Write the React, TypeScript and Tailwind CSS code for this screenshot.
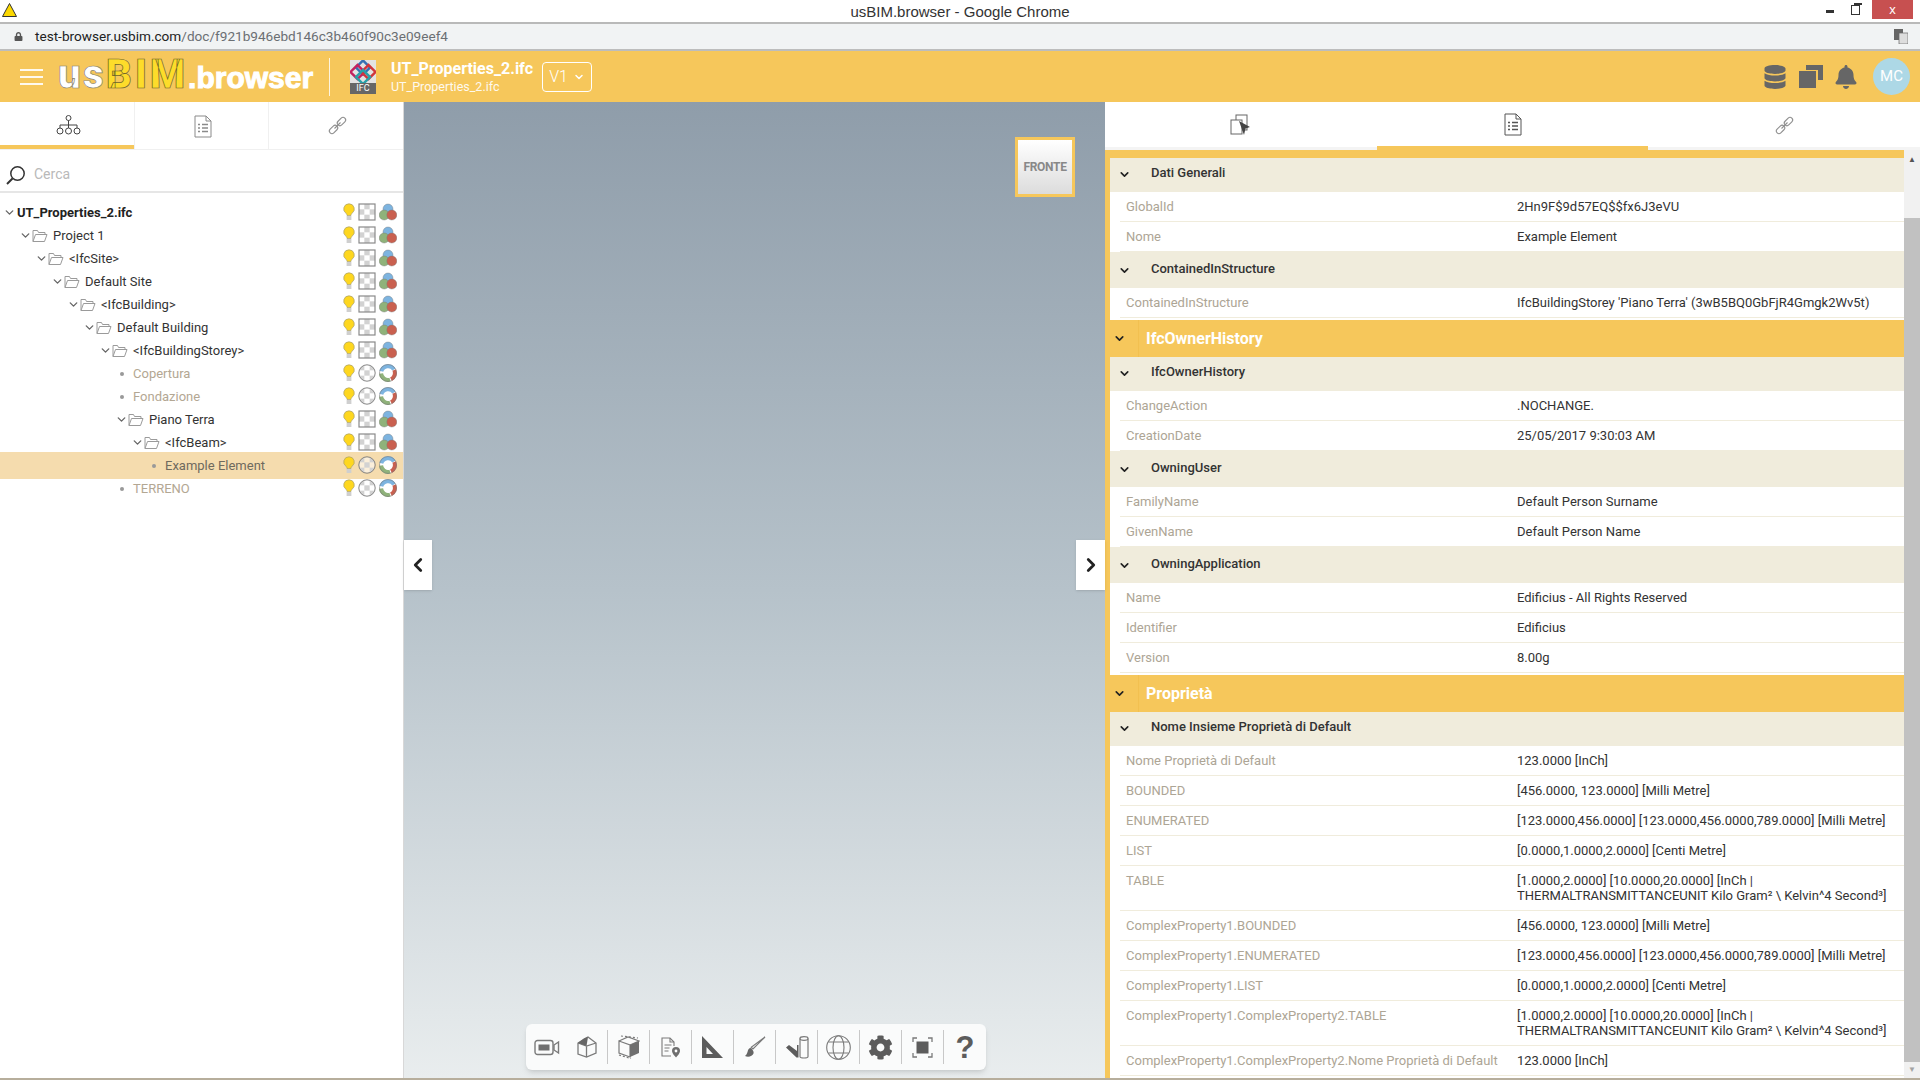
import { ChevronDown, ChevronLeft, ChevronRight } from 'lucide-react'
import { FaBell, FaCog, FaDatabase, FaLock } from 'react-icons/fa'

type TreeRow = { name: string; indent: number; kind: 'root' | 'folder' | 'leaf'; selected?: boolean }

const tree: TreeRow[] = [
  { name: 'UT_Properties_2.ifc', indent: 0, kind: 'root' },
  { name: 'Project 1', indent: 0, kind: 'folder' },
  { name: '<IfcSite>', indent: 1, kind: 'folder' },
  { name: 'Default Site', indent: 2, kind: 'folder' },
  { name: '<IfcBuilding>', indent: 3, kind: 'folder' },
  { name: 'Default Building', indent: 4, kind: 'folder' },
  { name: '<IfcBuildingStorey>', indent: 5, kind: 'folder' },
  { name: 'Copertura', indent: 6, kind: 'leaf' },
  { name: 'Fondazione', indent: 6, kind: 'leaf' },
  { name: 'Piano Terra', indent: 6, kind: 'folder' },
  { name: '<IfcBeam>', indent: 7, kind: 'folder' },
  { name: 'Example Element', indent: 8, kind: 'leaf', selected: true },
  { name: 'TERRENO', indent: 6, kind: 'leaf' },
]

type Block =
  | { type: 'band'; title: string }
  | { type: 'head'; title: string; first?: boolean }
  | { type: 'row'; label: string; value: string; tall?: boolean }

const THERMAL = '[1.0000,2.0000] [10.0000,20.0000] [InCh | THERMALTRANSMITTANCEUNIT Kilo Gram² \\ Kelvin^4 Second³]'
const ENUM = '[123.0000,456.0000] [123.0000,456.0000,789.0000] [Milli Metre]'

const blocks: Block[] = [
  { type: 'head', title: 'Dati Generali', first: true },
  { type: 'row', label: 'GlobalId', value: '2Hn9F$9d57EQ$$fx6J3eVU' },
  { type: 'row', label: 'Nome', value: 'Example Element' },
  { type: 'head', title: 'ContainedInStructure' },
  { type: 'row', label: 'ContainedInStructure', value: "IfcBuildingStorey 'Piano Terra' (3wB5BQ0GbFjR4Gmgk2Wv5t)" },
  { type: 'band', title: 'IfcOwnerHistory' },
  { type: 'head', title: 'IfcOwnerHistory', first: true },
  { type: 'row', label: 'ChangeAction', value: '.NOCHANGE.' },
  { type: 'row', label: 'CreationDate', value: '25/05/2017 9:30:03 AM' },
  { type: 'head', title: 'OwningUser' },
  { type: 'row', label: 'FamilyName', value: 'Default Person Surname' },
  { type: 'row', label: 'GivenName', value: 'Default Person Name' },
  { type: 'head', title: 'OwningApplication' },
  { type: 'row', label: 'Name', value: 'Edificius - All Rights Reserved' },
  { type: 'row', label: 'Identifier', value: 'Edificius' },
  { type: 'row', label: 'Version', value: '8.00g' },
  { type: 'band', title: 'Proprietà' },
  { type: 'head', title: 'Nome Insieme Proprietà di Default', first: true },
  { type: 'row', label: 'Nome Proprietà di Default', value: '123.0000 [InCh]' },
  { type: 'row', label: 'BOUNDED', value: '[456.0000, 123.0000] [Milli Metre]' },
  { type: 'row', label: 'ENUMERATED', value: ENUM },
  { type: 'row', label: 'LIST', value: '[0.0000,1.0000,2.0000] [Centi Metre]' },
  { type: 'row', label: 'TABLE', value: THERMAL, tall: true },
  { type: 'row', label: 'ComplexProperty1.BOUNDED', value: '[456.0000, 123.0000] [Milli Metre]' },
  { type: 'row', label: 'ComplexProperty1.ENUMERATED', value: ENUM },
  { type: 'row', label: 'ComplexProperty1.LIST', value: '[0.0000,1.0000,2.0000] [Centi Metre]' },
  { type: 'row', label: 'ComplexProperty1.ComplexProperty2.TABLE', value: THERMAL, tall: true },
  { type: 'row', label: 'ComplexProperty1.ComplexProperty2.Nome Proprietà di Default', value: '123.0000 [InCh]' },
]

function Bulb() {
  return (
    <svg width="12" height="18" viewBox="0 0 12 18">
      <path d="M6 .8a5.2 5.2 0 0 0-3 9.5c.7.6 1 1.2 1 2.2h4c0-1 .3-1.6 1-2.2A5.2 5.2 0 0 0 6 .8Z" fill="#fed71f" stroke="#a89f70" strokeWidth=".7" />
      <rect x="3.6" y="13" width="4.8" height="4" fill="#cfcfcf" />
    </svg>
  )
}

function Opacity({ round }: { round: boolean }) {
  const cells = [0, 1, 2].flatMap((y) => [0, 1, 2].map((x) => ({ x, y })))
  const id = round ? 'clip-round' : 'clip-square'
  return (
    <svg width="18" height="18" viewBox="0 0 18 18">
      <defs>
        <clipPath id={id}>
          {round ? <circle cx="9" cy="9" r="8" /> : <rect x="1" y="1" width="16" height="16" />}
        </clipPath>
      </defs>
      <g clipPath={`url(#${id})`}>
        <rect width="18" height="18" fill="#fff" fillOpacity=".55" />
        {cells
          .filter((c) => (c.x + c.y) % 2 === (round ? 0 : 1))
          .map((c) => (
            <rect key={`${c.x}${c.y}`} x={1 + c.x * 5.33} y={1 + c.y * 5.33} width="5.33" height="5.33" fill="#d2d2d2" />
          ))}
      </g>
      {round ? (
        <circle cx="9" cy="9" r="8.2" fill="none" stroke="#777" strokeWidth=".9" />
      ) : (
        <rect x="1" y="1" width="16" height="16" fill="none" stroke="#8a8a8a" strokeWidth="1.2" />
      )}
    </svg>
  )
}

function Colours({ ring }: { ring: boolean }) {
  if (ring) {
    return (
      <svg width="18" height="18" viewBox="0 0 18 18">
        <circle cx="9" cy="9" r="8.5" fill="#fff" />
        <path d="M2.3 7.300A7 7 0 0 1 15 5.500" fill="none" stroke="#7db4e0" strokeWidth="4" />
        <path d="M2.100 9.500A7 7 0 0 0 11 15.700" fill="none" stroke="#8fb27a" strokeWidth="4" />
        <path d="M15.200 6A7 7 0 0 1 12 15.300" fill="none" stroke="#c9604f" strokeWidth="4" />
        <circle cx="9" cy="9" r="8.500" fill="none" stroke="#777" strokeWidth=".6" />
      </svg>
    )
  }
  return (
    <svg width="18" height="18" viewBox="0 0 18 18">
      <circle cx="9" cy="6" r="5" fill="#7db4e0" stroke="#777" strokeWidth=".4" />
      <circle cx="5.2" cy="12" r="5" fill="#8fb27a" stroke="#777" strokeWidth=".4" />
      <circle cx="12.8" cy="12" r="5" fill="#c9604f" stroke="#777" strokeWidth=".4" />
    </svg>
  )
}

function Folder() {
  return (
    <svg width="16" height="14" viewBox="0 0 16 14" fill="none" stroke="#9a9a9a" strokeWidth="1">
      <path d="M1 12.5V1.5h4.5l1 2h6.5v2" />
      <path d="M1 12.5 3.5 5.5H15l-2.5 7Z" fill="#fff" />
    </svg>
  )
}

function DocList({ color = '#8a8a8a' }: { color?: string }) {
  return (
    <svg width="18" height="23" viewBox="0 0 18 23" fill="none" stroke={color}>
      <path d="M1 1h11l5 5v16H1Z" />
      <path d="M12 1v5h5" />
      <path d="M4 9.5h2M8 9.5h6M4 13h2M8 13h6M4 16.5h2M8 16.5h6" strokeWidth="1.4" />
    </svg>
  )
}

function ChainLink() {
  return (
    <svg width="21" height="21" viewBox="0 0 21 21" fill="none" stroke="#8f8f8f" strokeWidth="1.1">
      <rect x="-4.6" y="-2.6" width="9.6" height="5.2" rx="2.6" transform="translate(6.4 14.6) rotate(-45)" />
      <rect x="-5" y="-2.6" width="9.6" height="5.2" rx="2.6" transform="translate(14.6 6.4) rotate(-45)" />
      <path d="m7.5 13.5 6-6" />
    </svg>
  )
}

function TreeIcon() {
  return (
    <svg width="25" height="20" viewBox="0 0 25 20" fill="none" stroke="#444" strokeWidth="1">
      <circle cx="12.5" cy="3" r="2.5" />
      <path d="M12.5 5.5V10M4 13v-3h17v3M12.5 10v3" />
      <circle cx="4" cy="16" r="3" />
      <circle cx="12.5" cy="16" r="3" />
      <circle cx="21" cy="16" r="3" />
    </svg>
  )
}

function SelectIcon() {
  return (
    <svg width="22" height="22" viewBox="0 0 22 22" fill="none" stroke="#666">
      <rect x="6" y="1" width="11" height="15" fill="#fff" />
      <rect x="1" y="6" width="11" height="14" fill="#fff" />
      <path d="m9 7 11 6-4.5 1.5L14 21Z" fill="#444" stroke="none" />
    </svg>
  )
}

function IfcIcon() {
  return (
    <div className="relative w-[26px] h-[34px] bg-[#e3e3e3]">
      <svg width="26" height="26" viewBox="0 0 26 26" fill="none" strokeWidth="2.4">
        <rect x="8" y="2.5" width="10" height="10" transform="rotate(45 13 7.5)" stroke="#3670b3" />
        <rect x="2.5" y="7" width="10" height="10" transform="rotate(45 7.5 12)" stroke="#c2225f" />
        <rect x="13.5" y="7" width="10" height="10" transform="rotate(45 18.5 12)" stroke="#d2353a" />
        <rect x="8" y="12" width="10" height="10" transform="rotate(45 13 17)" stroke="#29a0a8" />
      </svg>
      <div className="absolute bottom-0 inset-x-0 h-[11px] bg-[#666] text-white text-[9px] leading-[11px] text-center font-['Roboto',sans-serif]">IFC</div>
    </div>
  )
}

function Squares() {
  return (
    <svg width="24" height="23" viewBox="0 0 24 23" fill="#666">
      <path d="M7 0h17v15h-5V5H7Z" />
      <rect x="0" y="6" width="17" height="17" />
    </svg>
  )
}

function ToolIcon({ name }: { name: string }) {
  const stroke = '#7a7a7a'
  if (name === 'camera')
    return (
      <svg width="26" height="17" viewBox="0 0 26 17" fill="none" stroke={stroke} strokeWidth="1.4">
        <rect x="1" y="1.5" width="18" height="14" rx="2.5" />
        <rect x="4.5" y="5.5" width="11" height="6" fill="#6f6f6f" stroke="none" />
        <path d="m20 6 4.5-3v11L20 11Z" />
      </svg>
    )
  if (name === 'house')
    return (
      <svg width="20" height="22" viewBox="0 0 20 22" fill="none" stroke={stroke} strokeWidth="1.3">
        <path d="M1 7v11l8.500 3 9.500-4V7l-8-6-3 1.500Z" />
        <path d="M1 7l8.500 3L19 7M9.500 10v11" />
        <path d="M1 7l6-4.500 4-1.500-1.500 9Z" fill="#666" stroke="none" />
      </svg>
    )
  if (name === 'cube')
    return (
      <svg width="22" height="24" viewBox="0 0 22 24" fill="none" stroke={stroke} strokeWidth="1.2">
        <path d="M1 6v12l11 4V10Z" />
        <path d="M1 6 10 2l11 4-9 4" />
        <path d="M12 10l9-4v12l-9 4Z" fill="#6f6f6f" stroke="none" />
        <path d="M3 1 20 3M1 20l12 3.500" strokeDasharray="2 2" />
      </svg>
    )
  if (name === 'doc')
    return (
      <svg width="20" height="21" viewBox="0 0 20 21" fill="none" stroke={stroke} strokeWidth="1.1">
        <path d="M10 19H1V1h8l4 4v4" />
        <path d="M9 1v4h4M3.500 8h7M3.500 11h5M3.500 14h4" />
        <path d="M15 10a4 4 0 0 0-4 4c0 2.500 4 6.500 4 6.500s4-4 4-6.500a4 4 0 0 0-4-4Z" fill="#6f6f6f" stroke="none" />
        <circle cx="15" cy="14" r="1.400" fill="#fff" stroke="none" />
      </svg>
    )
  if (name === 'square')
    return (
      <svg width="21" height="22" viewBox="0 0 21 22" fill="#5c5c5c">
        <path fillRule="evenodd" d="M0 0 21 22H0ZM4.500 11v7h6.500Z" />
      </svg>
    )
  if (name === 'brush')
    return (
      <svg width="22" height="22" viewBox="0 0 22 22">
        <path d="M21 1 9 13l-1.800-1.800Z" fill="none" stroke={stroke} strokeWidth="1.200" />
        <path d="M7 12c-2.500 0-3 2-3.500 4S2 19 1 20c3 1.500 7.500.5 8.500-2.500.4-1.500 0-3-2.500-5.500Z" fill="#666" />
      </svg>
    )
  if (name === 'cyl')
    return (
      <svg width="24" height="23" viewBox="0 0 24 23" fill="none" stroke={stroke} strokeWidth="1.200">
        <ellipse cx="19" cy="2.500" rx="4" ry="1.800" />
        <path d="M15 2.500v18c0 2 8 2 8 0v-18" />
        <path d="M1 11.500 4 9l8 6V9h1.500v12.500h-2Z" fill="#5c5c5c" stroke="none" />
      </svg>
    )
  if (name === 'globe')
    return (
      <svg width="25" height="25" viewBox="0 0 25 25" fill="none" stroke={stroke} strokeWidth="1.100">
        <circle cx="12.500" cy="12.500" r="11.800" />
        <ellipse cx="12.500" cy="12.500" rx="5.500" ry="11.800" />
        <path d="M2.500 7h20M2.500 18h20" />
      </svg>
    )
  if (name === 'gear') return <FaCog size={25} color="#5c5c5c" />
  if (name === 'frame')
    return (
      <svg width="21" height="21" viewBox="0 0 21 21" fill="none" stroke={stroke} strokeWidth="1.300">
        <path d="M1 5V1h4M16 1h4v4M20 16v4h-4M5 20H1v-4" />
        <rect x="4.500" y="4.500" width="12" height="12" fill="#5c5c5c" stroke="none" />
      </svg>
    )
  return <span className="text-[31px] leading-none font-bold text-[#5c5c5c] font-['Liberation_Sans',sans-serif]">?</span>
}

const tools = ['camera', 'house', 'cube', 'doc', 'square', 'brush', 'cyl', 'globe', 'gear', 'frame', 'help']

function PropertyBlock({ block }: { block: Block }) {
  if (block.type === 'band') {
    return (
      <div className="flex items-center h-[37px] mt-[2px] -ml-[5px] bg-[#f6c75b]">
        <div className="flex items-center justify-center w-[34px] h-full pr-[5px] border-r border-[#f2c050]">
          <ChevronDown size={13} strokeWidth={3} color="#222" />
        </div>
        <span className="pl-[7px] text-[16px] font-bold text-white">{block.title}</span>
      </div>
    )
  }
  if (block.type === 'head') {
    return (
      <div className={`flex bg-[#f0ecdc] ${block.first ? 'h-[34px] items-start pt-[7px]' : 'h-[36px] items-start pt-[9px]'}`}>
        <div className="flex items-center justify-center w-[34px] h-[18px] pr-[6px]">
          <ChevronDown size={13} strokeWidth={3} color="#222" />
        </div>
        <span className="pl-[7px] text-[13px] leading-[16px] font-medium text-[#333]">{block.title}</span>
      </div>
    )
  }
  return (
    <div className={`flex items-start pt-[7px] ml-[10px] bg-white border-b border-[#f0ecdc] ${block.tall ? 'h-[45px]' : 'h-[30px]'}`}>
      <div className="w-[397px] pl-[6px] shrink-0 text-[13px] leading-[15px] text-[#ada595] whitespace-nowrap">{block.label}</div>
      <div className="flex-1 pr-3 text-[13px] leading-[15px] text-[#333]">{block.value}</div>
    </div>
  )
}

export default function App() {
  return (
    <div className="flex flex-col w-[1920px] h-[1080px] overflow-hidden bg-white font-['Roboto',sans-serif]">
      {/* chrome title bar */}
      <div className="relative flex items-center justify-center h-[24px] pt-[2px] shrink-0 bg-white border-b-2 border-[#b9b9b9]">
        <svg className="absolute left-[2px] top-[3px]" width="15" height="14" viewBox="0 0 15 14">
          <path d="M7.500.5 14.500 13.500H.5Z" fill="#fbd800" stroke="#333" />
        </svg>
        <span className="text-[15px] text-[#333] font-['Liberation_Sans',sans-serif]">usBIM.browser - Google Chrome</span>
        <div className="absolute right-[7px] top-0 flex items-start">
          <div className="w-[8px] h-[3px] mt-[10px] mr-[17px] bg-[#333]" />
          <div className="relative w-[9px] h-[10px] mt-[5px] mr-[12px] border border-[#333] bg-white">
            <div className="absolute -top-[3px] left-[2px] w-[8px] h-[2px] bg-[#333]" />
          </div>
          <div className="flex items-center justify-center w-[41px] h-[19px] bg-[#c75050] text-white text-[13px] font-['Liberation_Sans',sans-serif]">x</div>
        </div>
      </div>

      {/* address bar */}
      <div className="flex items-center justify-between h-[27px] shrink-0 pl-[14px] pr-[12px] bg-[#f1f3f4] border-b-2 border-[#bdbdbd]">
        <div className="flex items-center gap-[12px]">
          <FaLock size={9} color="#555" />
          <span className="text-[13.6px] text-[#6b6f73]">
            <span className="text-[#222]">test-browser.usbim.com</span>/doc/f921b946ebd146c3b460f90c3e09eef4
          </span>
        </div>
        <svg width="14" height="15" viewBox="0 0 14 15">
          <rect x="0" y="0" width="9" height="11" fill="#666" />
          <rect x="5" y="4" width="9" height="11" fill="#ddd" stroke="#666" strokeWidth=".7" />
        </svg>
      </div>

      {/* app header */}
      <header className="flex items-center h-[51px] shrink-0 bg-[#f6c75b]">
        <div className="flex flex-col gap-[5px] w-[23px] ml-[20px]">
          <div className="h-[2px] bg-white/90" />
          <div className="h-[2px] bg-white/90" />
          <div className="h-[2px] bg-white/90" />
        </div>
        <div className="flex items-baseline ml-[15px] -mt-[3px] w-[271px] font-bold">
          <span className="text-[40px] leading-none tracking-[2.500px] font-black text-white [-webkit-text-stroke:0.7px_#8a836c]">us</span>
          <span className="text-[40px] leading-none tracking-[3px] font-black text-[#fddc2a] [-webkit-text-stroke:0.7px_#6e6428]">BIM</span>
          <span className="text-[30px] leading-none text-white font-['Liberation_Sans',sans-serif] [-webkit-text-stroke:1px_#fff]">.browser</span>
        </div>
        <div className="w-px h-[38px] bg-white/80" />
        <div className="ml-[20px]">
          <IfcIcon />
        </div>
        <div className="ml-[15px] flex flex-col text-white">
          <span className="text-[16px] leading-[19px] font-bold">UT_Properties_2.ifc</span>
          <span className="text-[12.500px] leading-[16px] mt-[1px] opacity-90">UT_Properties_2.ifc</span>
        </div>
        <div className="flex items-center justify-center gap-[5px] w-[50px] h-[30px] ml-[9px] rounded border border-white text-white text-[16px] font-light">
          V1
          <ChevronDown size={12} strokeWidth={3} />
        </div>
        <div className="flex items-center ml-auto">
          <FaDatabase size={24} color="#666" />
          <div className="ml-[12px]"><Squares /></div>
          <div className="ml-[11px]"><FaBell size={24} color="#666" /></div>
          <div className="flex items-center justify-center w-[37px] h-[37px] ml-[15px] mr-[10px] rounded-full bg-[#add8e6] text-white text-[15px]">MC</div>
        </div>
      </header>

      <div className="flex flex-1 min-h-0">
        {/* left panel */}
        <aside className="flex flex-col w-[404px] shrink-0 border-r border-[#d8d8d8] bg-white">
          <div className="grid grid-cols-3 h-[48px] shrink-0 border-b border-[#f0f0f0]">
            <div className="flex items-center justify-center pl-[2px] pt-[3px] border-b-4 border-[#f6c75b]"><TreeIcon /></div>
            <div className="flex items-center justify-center pl-[3px] pt-[1px] border-r border-l border-[#f0f0f0]"><DocList /></div>
            <div className="flex items-center justify-center pl-[3px]"><ChainLink /></div>
          </div>
          <div className="flex items-center h-[43px] pt-[8px] shrink-0 pl-[6px] border-b-2 border-[#e6e6e6]">
            <svg width="20" height="20" viewBox="0 0 20 20" fill="none" stroke="#333" strokeWidth="1.500">
              <circle cx="11.500" cy="8.500" r="6.700" />
              <path d="M6.500 13.500 1 19" strokeWidth="2" />
            </svg>
            <span className="ml-[8px] text-[14px] text-[#b9b9b9]">Cerca</span>
          </div>
          <div className="pt-2">
            {tree.map((row) => (
              <div
                key={row.name}
                className={`flex items-center justify-between pr-[6px] ${row.selected ? 'h-[27px] -my-[2px] bg-[#f5dcae]' : 'h-[23px]'}`}
              >
                <div className="flex items-center min-w-0" style={{ paddingLeft: (row.kind === 'root' ? 3 : 19) + row.indent * 16 }}>
                  {row.kind === 'leaf' ? (
                    <>
                      <span className="w-[4px] h-[4px] ml-[5px] mr-[9px] rounded-full bg-[#999]" />
                      <span className={`text-[13px] ${row.selected ? 'text-[#6f6a5e]' : 'text-[#b3a793]'}`}>{row.name}</span>
                    </>
                  ) : (
                    <>
                      <ChevronDown size={13} strokeWidth={2.5} color="#666" className="shrink-0" />
                      {row.kind === 'folder' && <span className="mr-[5px]"><Folder /></span>}
                      <span className={`text-[13px] ${row.kind === 'root' ? 'font-bold text-[#222] ml-[1px]' : 'text-[#333]'}`}>{row.name}</span>
                    </>
                  )}
                </div>
                <div className="flex items-center gap-[3px] pb-[2px] shrink-0">
                  <Bulb />
                  <Opacity round={row.kind === 'leaf'} />
                  <Colours ring={row.kind === 'leaf'} />
                </div>
              </div>
            ))}
          </div>
        </aside>

        {/* 3d viewport */}
        <main className="relative flex-1 bg-gradient-to-b from-[#8f9daa] via-[#b6c2ca] to-[#e9edee]">
          <div className="absolute top-[35px] right-[30px] flex items-center justify-center w-[60px] h-[60px] border-[3px] border-[#f6c75b] bg-gradient-to-b from-white to-[#dcdcdc] text-[12px] tracking-[-0.3px] font-bold text-[#888]">FRONTE</div>
          <div className="absolute left-0 top-[438px] flex items-center justify-center w-[28px] h-[50px] bg-white shadow">
            <ChevronLeft size={22} strokeWidth={3} color="#222" />
          </div>
          <div className="absolute right-0 top-[438px] flex items-center justify-center w-[29px] h-[50px] bg-white shadow">
            <ChevronRight size={22} strokeWidth={3} color="#222" />
          </div>
          <div className="absolute left-[122px] bottom-[8px] flex items-center h-[46px] rounded-md bg-[#fafbfb] shadow-md">
            {tools.map((tool, i) => (
              <div key={tool} className={`flex items-center justify-center h-[34px] ${i < 2 ? 'w-[41px]' : 'w-[42px]'} ${i > 0 && i < 10 ? 'border-r border-[#c8c8c8]' : ''}`}>
                <ToolIcon name={tool} />
              </div>
            ))}
          </div>
        </main>

        {/* properties panel */}
        <section className="flex flex-col w-[815px] shrink-0 bg-white">
          <div className="grid grid-cols-[272px_271px_1fr] h-[48px] shrink-0">
            <div className="flex items-center justify-center pt-[1px] bg-white border-b-[3px] border-[#f4f4f4]"><SelectIcon /></div>
            <div className="flex items-center justify-center border-b-4 border-[#f6c75b]"><DocList color="#555" /></div>
            <div className="flex items-center justify-center pt-[1px] border-b-[3px] border-[#f4f4f4]"><ChainLink /></div>
          </div>
          <div className="flex flex-1 min-h-0">
            <div className="flex-1 min-w-0 overflow-hidden pl-[5px] pt-[8px] bg-[#f6c75b] text-[13px]">
              <div className="h-full bg-white">
                {blocks.map((block, i) => (
                  <PropertyBlock key={i} block={block} />
                ))}
              </div>
            </div>
            <div className="flex flex-col items-center w-[16px] shrink-0 bg-[#f1f1f1]">
              <div className="h-[20px] pt-[6px] text-[8px] leading-none text-[#555]">▲</div>
              <div className="w-full h-[844px] mt-[48px] bg-[#c1c1c1]" />
              <div className="mt-[4px] text-[8px] leading-none text-[#a3a3a3]">▼</div>
            </div>
          </div>
        </section>
      </div>
      <div className="h-[2px] shrink-0 bg-[#b7ae9c]" />
    </div>
  )
}
